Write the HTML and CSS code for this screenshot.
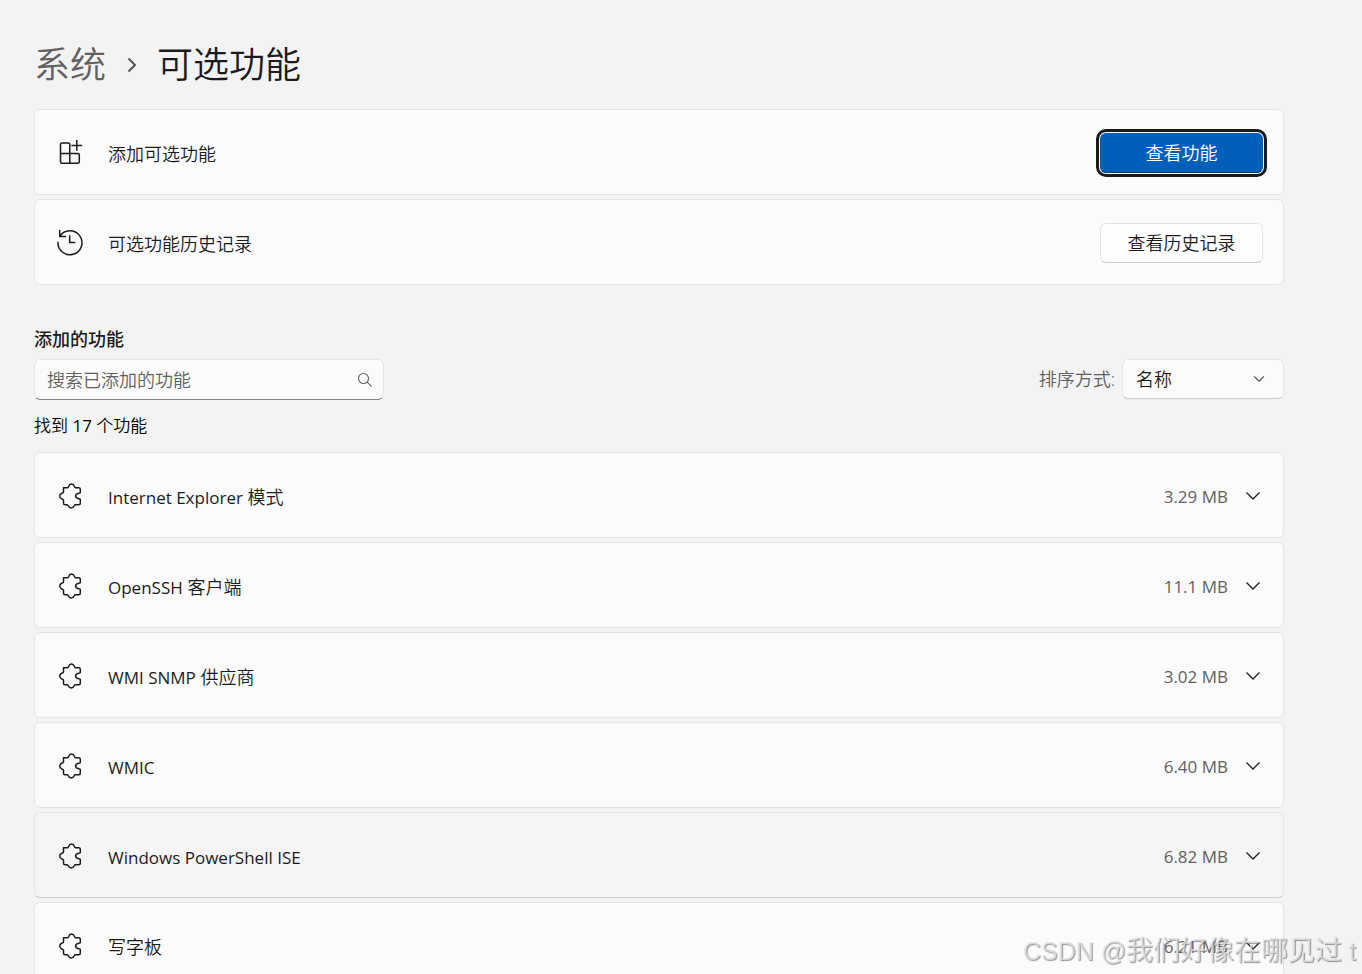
FILE: index.html
```html
<!DOCTYPE html>
<html lang="zh-CN">
<head>
<meta charset="utf-8">
<title>可选功能</title>
<link rel="stylesheet" href="styles.css">
</head>
<body>
<svg class="sprite" aria-hidden="true">
  <symbol id="puzzle" viewBox="0 0 28 28"><path d="M6.500 5.700H10.700C11.900 5.700 11.300 2 14.500 2S17.200 5.700 18.400 5.700H21.800Q23.300 5.700 23.300 7.200V10.400C23.300 11.700 18.600 10.400 18.600 14S23.300 16.300 23.300 17.600V21.200Q23.300 22.700 21.800 22.700H18.200C17 22.700 17.400 26 14.200 26S11.500 22.700 10.300 22.700H8Q6.500 22.700 6.500 21.200V18.200C6.500 17 2.700 17.400 2.700 14.100S6.500 11.200 6.500 10Z"/></symbol>
  <symbol id="down" viewBox="0 0 16 16"><path d="M1.5 4.5 8 11l6.500-6.500"/></symbol>
</svg>
<main class="page">
  <nav class="crumbs" aria-label="导航">
    <a class="parent" href="#">系统</a>
    <svg class="crumb-arrow" viewBox="0 0 12 18"><path d="M2.500 2.500 9 9l-6.500 6.500"/></svg>
    <h1>可选功能</h1>
  </nav>

  <section class="stack">
    <div class="card">
      <svg class="icon" viewBox="0 0 28 28"><path d="M12.800 24.300V5.400q0-1.500-1.500-1.500H5q-1.500 0-1.500 1.500v17.400q0 1.500 1.500 1.500h15.800q1.500 0 1.500-1.500v-6.900q0-1.500-1.500-1.500H3.500M19.800 1v10.800M14.400 6.400h10.800"/></svg>
      <span class="name">添加可选功能</span>
      <button class="btn primary">查看功能</button>
    </div>
    <div class="card">
      <svg class="icon" viewBox="0 0 28 28"><path d="M2.700 1v6.400h6.500M2.900 7.200A12 12 0 1 1 1 12.700M12.700 6.200v7.200h5.500"/></svg>
      <span class="name">可选功能历史记录</span>
      <button class="btn">查看历史记录</button>
    </div>
  </section>

  <h2>添加的功能</h2>
  <div class="tools">
    <div class="search">
      <input type="text" aria-label="搜索已添加的功能" placeholder="搜索已添加的功能">
      <svg class="lens" viewBox="0 0 16 16"><circle cx="6.500" cy="6.500" r="5"/><path d="m10.200 10.200 4.500 4.500"/></svg>
    </div>
    <div class="sort">
      <label for="sort">排序方式:</label>
      <div class="select">
        <select id="sort"><option>名称</option></select>
        <svg class="caret" viewBox="0 0 16 16"><use href="#down"/></svg>
      </div>
    </div>
  </div>
  <p class="count">找到 <span class="latin">17</span> 个功能</p>

  <section class="stack">
    <button class="card"><svg class="icon"><use href="#puzzle"/></svg><span class="name"><span class="latin">Internet Explorer</span> 模式</span><span class="size">3.29 MB</span><svg class="chevron"><use href="#down"/></svg></button>
    <button class="card"><svg class="icon"><use href="#puzzle"/></svg><span class="name"><span class="latin">OpenSSH</span> 客户端</span><span class="size">11.1 MB</span><svg class="chevron"><use href="#down"/></svg></button>
    <button class="card"><svg class="icon"><use href="#puzzle"/></svg><span class="name"><span class="latin">WMI SNMP</span> 供应商</span><span class="size">3.02 MB</span><svg class="chevron"><use href="#down"/></svg></button>
    <button class="card"><svg class="icon"><use href="#puzzle"/></svg><span class="name"><span class="latin">WMIC</span></span><span class="size">6.40 MB</span><svg class="chevron"><use href="#down"/></svg></button>
    <button class="card hovered"><svg class="icon"><use href="#puzzle"/></svg><span class="name"><span class="latin">Windows PowerShell ISE</span></span><span class="size">6.82 MB</span><svg class="chevron"><use href="#down"/></svg></button>
    <button class="card"><svg class="icon"><use href="#puzzle"/></svg><span class="name">写字板</span><span class="size">6.21 MB</span><svg class="chevron"><use href="#down"/></svg></button>
  </section>
</main>
<div class="watermark">CSDN @<span class="author">我们好像在哪见过</span> t</div>
</body>
</html>
```
FILE: styles.css
```css
* { box-sizing: border-box; }

body {
  margin: 0;
  background: #f3f3f3;
  color: #1b1b1b;
  font: 350 18px/24px "Open Sans", "Noto Sans CJK SC", sans-serif;
}

button, input, select { font: inherit; color: inherit; }

svg {
  flex: none;
  fill: none;
  stroke: #1b1b1b;
  stroke-width: 1.5;
  stroke-linejoin: round;
}

.sprite { display: none; }

.page {
  height: 100vh;
  overflow: hidden;
  padding: 41px 78px 0 34px;
}

.crumbs {
  display: flex;
  align-items: center;
  height: 48px;
  margin-bottom: 20px;
  font-size: 36px;
  line-height: 48px;
}

.parent { color: #616161; text-decoration: none; }
.crumb-arrow { width: 12px; height: 18px; margin: 0 19px 0 20px; stroke: #555; stroke-width: 2; }
h1 { margin: 0; font-size: inherit; font-weight: inherit; }

.stack { display: flex; flex-direction: column; gap: 4px; }

.card {
  display: flex;
  align-items: center;
  width: 100%;
  height: 86px;
  padding: 2px 20px 0 22px;
  border: 1px solid #e5e5e5;
  border-radius: 6px;
  background: #fbfbfb;
  text-align: left;
}

.hovered { background: #f5f5f5; border-bottom-color: #ccc; }
.icon { width: 28px; height: 28px; margin-right: 23px; }
.name { flex: 1; padding-top: 2px; }
.latin, .size { font-size: 17px; font-weight: 400; }
.size { padding-top: 2px; color: #616161; }
.chevron { width: 16px; height: 16px; margin: 0 2px 0 17px; stroke-width: 1.3; }

.btn {
  width: 163px;
  height: 40px;
  padding: 0;
  border: 1px solid #e5e5e5;
  border-bottom-color: #ccc;
  border-radius: 6px;
  background: #fefefe;
}

.primary {
  border-color: #005fb8;
  border-bottom-color: #003e78;
  background: #005fb8;
  color: #fff;
  outline: 3px solid #1b1b1b;
  outline-offset: 1px;
}

h2 { margin: 42px 0 8px; font-size: 18px; line-height: 24px; font-weight: 500; }

.tools { display: flex; justify-content: space-between; }
.search, .select { display: grid; align-items: center; }
.search > *, .select > * { grid-area: 1 / 1; }

.search input {
  width: 350px;
  height: 41px;
  padding: 0 40px 0 12px;
  border: 1px solid #e5e5e5;
  border-bottom-color: #868686;
  border-radius: 6px;
  background: #fbfbfb;
}

.search input::placeholder { color: #616161; opacity: 1; }
.lens { width: 16px; height: 16px; margin-right: 11px; justify-self: end; stroke: #616161; stroke-width: 1.1; }

.sort { display: flex; align-items: center; gap: 7px; height: 40px; color: #616161; }

.select select {
  width: 162px;
  height: 40px;
  padding: 0 13px;
  border: 1px solid #e5e5e5;
  border-bottom-color: #ccc;
  border-radius: 6px;
  background: #fbfbfb;
  color: #1b1b1b;
  appearance: none;
}

.caret { width: 12px; height: 12px; margin-right: 19px; justify-self: end; pointer-events: none; stroke: #555; }
.count { margin: 14px 0; color: #000; font-size: 17px; }

.watermark {
  position: fixed;
  right: 6px;
  bottom: 5px;
  color: rgba(225, 225, 225, .75);
  font: 400 25px/36px "Liberation Sans", "Noto Sans CJK SC", sans-serif;
  text-shadow: 1px 1px 1px rgba(110, 110, 110, .7);
  white-space: nowrap;
  pointer-events: none;
}

.author { font-size: 27px; }
```
